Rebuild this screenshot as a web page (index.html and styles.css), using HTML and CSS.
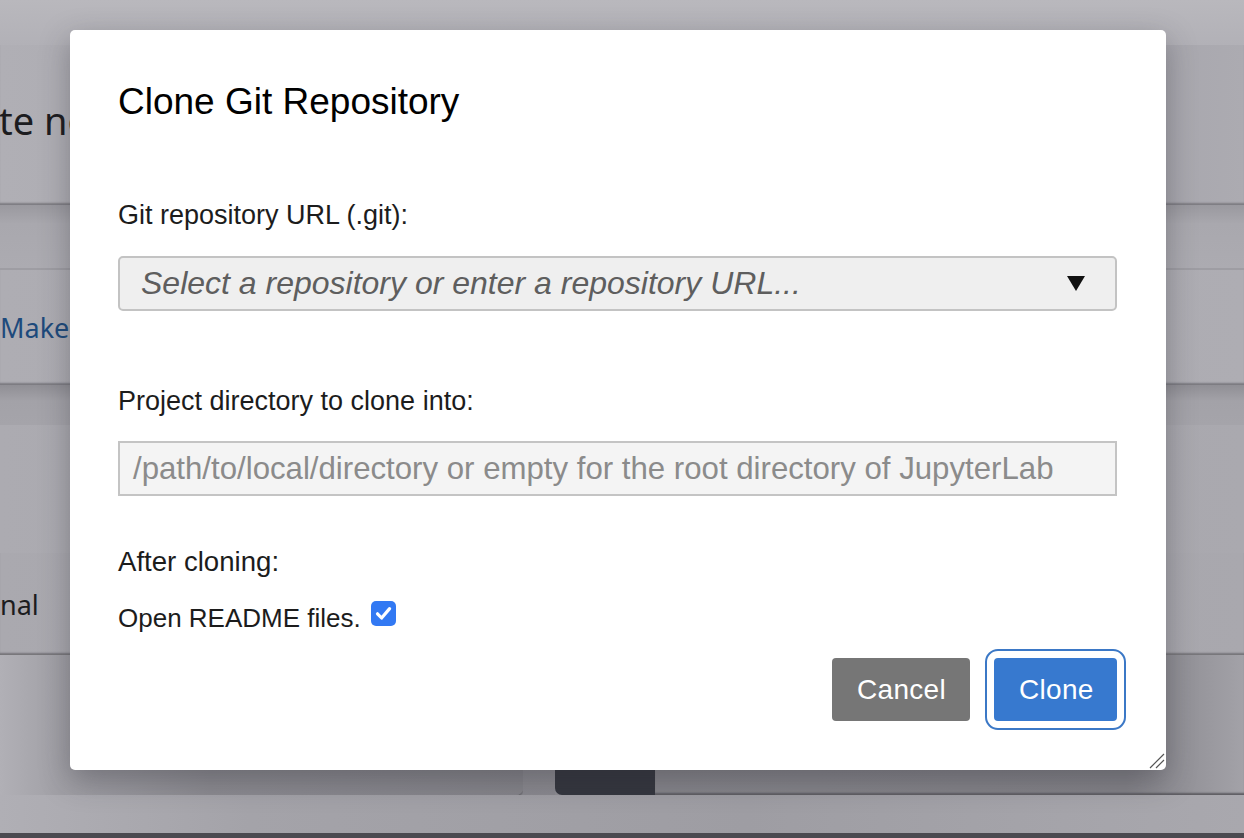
FILE: index.html
```html
<!DOCTYPE html>
<html>
<head>
<meta charset="utf-8">
<link rel="stylesheet" href="styles.css">
</head>
<body>
<div class="bg">
  <div class="row r-top"></div>
  <div class="row r-card1"><div class="clip"><span class="bg-text t1">te no</span></div></div>
  <div class="row r-band1"></div>
  <div class="row r-card2"><div class="clip"><span class="bg-text t2">Maker</span></div></div>
  <div class="row r-band2"></div>
  <div class="row r-area"></div>
  <div class="row r-card3"><div class="clip"><span class="bg-text t3">nal</span></div></div>
  <div class="row r-cards">
    <div class="tile tile-left"></div>
    <div class="tile-gap"></div>
    <div class="tile tile-dark"></div>
    <div class="tile tile-right"></div>
  </div>
  <div class="row r-band3"></div>
  <div class="row r-bottom"></div>
</div>

<div class="dialog">
  <h1 class="title">Clone Git Repository</h1>
  <div class="label l1">Git repository URL (.git):</div>
  <div class="select">
    <span class="select-text">Select a repository or enter a repository URL...</span>
    <svg class="arrow" width="18" height="15" viewBox="0 0 18 15"><polygon points="0,0 18,0 9,15" fill="#111"/></svg>
  </div>
  <div class="label l2">Project directory to clone into:</div>
  <div class="input"><span class="placeholder">/path/to/local/directory or empty for the root directory of JupyterLab</span></div>
  <div class="label l3">After cloning:</div>
  <div class="check-row">
    <span class="label-inline">Open README files.</span>
    <span class="checkbox">
      <svg width="25" height="25" viewBox="0 0 25 25"><path d="M6.5 12.8 L10.6 17 L18.6 7.6" fill="none" stroke="#fff" stroke-width="3.2" stroke-linecap="round" stroke-linejoin="round"/></svg>
    </span>
  </div>
  <div class="buttons">
    <button class="btn btn-cancel">Cancel</button>
    <button class="btn btn-clone">Clone</button>
  </div>
  <svg class="grip" width="18" height="18" viewBox="0 0 18 18"><path d="M3 17 L17 3 M9 17 L17 9" stroke="#555" stroke-width="1.2" fill="none"/></svg>
</div>
</body>
</html>
```

FILE: styles.css
```css
html, body {
  margin: 0;
  padding: 0;
  width: 1244px;
  height: 838px;
  overflow: hidden;
  background: #a9a8ae;
}

.bg {
  display: flex;
  flex-direction: column;
  width: 1244px;
  height: 838px;
}

.row {
  flex: none;
  position: relative;
  overflow: hidden;
}

.clip {
  width: 70px;
  overflow: hidden;
  white-space: nowrap;
}

.r-top { height: 45px; background: linear-gradient(#b9b8bd, #b2b1b7); }
.r-card1 {
  height: 160px;
  background: linear-gradient(90deg, #b0afb5, #a7a6ac 40%, #a6a5ac 90%, #acabb1);
  box-shadow: inset 0 -3px 2px -1px #7d7c82;
  display: flex;
  align-items: center;
}
.r-band1 {
  height: 65px;
  background: linear-gradient(#9a999f, #a9a8ae 30%, #acabb1);
  border-bottom: 2px solid #9e9da3;
  box-sizing: border-box;
}
.r-card2 {
  height: 115px;
  background: linear-gradient(90deg, #aeadb3, #a8a7ad 50%, #aeadb3);
  box-shadow: inset 0 -3px 2px -1px #7b7a80;
  display: flex;
  align-items: center;
}
.r-band2 { height: 40px; background: linear-gradient(#908f95, #a3a2a8 40%, #a5a4aa); }
.r-area { height: 128px; background: linear-gradient(90deg, #acabb1, #a4a3a9 50%, #aaa9af); }
.r-card3 {
  height: 102px;
  background: linear-gradient(90deg, #aaa9af, #a3a2a8 50%, #a9a8ae);
  box-shadow: inset 0 -3px 2px -1px #757479;
  display: flex;
  align-items: center;
}
.r-cards {
  height: 140px;
  display: flex;
  background: #8e8d93;
}
.tile-left {
  width: 523px;
  background: linear-gradient(90deg, #b1b0b6, #a09fa5 12%, #8c8b91 40%, #85848a 100%);
  border-bottom-right-radius: 7px;
  box-shadow: 0 2px 2px #66656a;
}
.tile-gap { width: 32px; background: linear-gradient(#97969c, #8a898f); }
.tile-dark {
  width: 100px;
  background: #34363e;
  border-bottom-left-radius: 7px;
}
.tile-right {
  flex: 1;
  background: linear-gradient(90deg, #86858b, #838288 80%, #a3a2a8);
  box-shadow: inset 0 -3px 2px -1px #5e5d62;
}
.r-band3 { height: 38px; background: linear-gradient(90deg, #b0afb5, #a4a3a9 20%, #9e9da3 60%, #a9a8ae); }
.r-bottom { height: 0; flex: 1; background: #4b4a50; }

.bg-text {
  font-family: "Noto Sans", sans-serif;
  color: #1c1c20;
  white-space: nowrap;
}
.t1 { display: block; font-size: 38px; margin-left: -1px; margin-top: -10px; }
.t2 { display: block; font-size: 27px; color: #1d4a7c; margin-top: 0; }
.t3 { display: block; font-size: 27px; margin-top: 0; }

.dialog {
  position: absolute;
  left: 70px;
  top: 30px;
  width: 1096px;
  height: 740px;
  box-sizing: border-box;
  background: #fff;
  border-radius: 5px;
  padding: 50px 49px 49px 48px;
  box-shadow: 0 10px 30px rgba(40, 40, 50, 0.35);
  font-family: "Liberation Sans", Arial, sans-serif;
  color: #1a1a1a;
}

.title {
  margin: 0;
  font-size: 37px;
  line-height: 44px;
  font-weight: normal;
  color: #000;
}

.label {
  font-size: 27px;
  line-height: 32px;
  color: #1c1c1c;
}
.l1 { margin-top: 75px; }
.l2 { margin-top: 74px; }
.l3 { margin-top: 50px; font-size: 27.6px; }

.select {
  margin-top: 25px;
  height: 55px;
  box-sizing: border-box;
  border: 2px solid #c3c3c3;
  border-radius: 5px;
  background: #efefef;
  display: flex;
  align-items: center;
  justify-content: space-between;
  padding: 0 30px 0 21px;
}
.select-text {
  font-size: 32px;
  font-style: italic;
  color: #5e5e5e;
  white-space: nowrap;
}
.arrow { display: block; }

.input {
  margin-top: 24px;
  height: 55px;
  box-sizing: border-box;
  border: 2px solid #c4c4c4;
  background: #f4f4f4;
  display: flex;
  align-items: center;
  padding: 0 13px;
}
.placeholder {
  font-size: 31.2px;
  color: #8b8b8b;
  white-space: nowrap;
}

.check-row {
  margin-top: 23px;
  height: 32px;
  display: flex;
  align-items: flex-start;
  gap: 10px;
}
.label-inline {
  font-size: 26px;
  line-height: 32px;
  color: #1c1c1c;
  margin-top: 1px;
}
.checkbox {
  width: 25px;
  height: 25px;
  border-radius: 5px;
  background: #3279f3;
  display: block;
}
.checkbox svg { display: block; }

.buttons {
  margin-top: 25px;
  display: flex;
  justify-content: flex-end;
  gap: 24px;
}
.btn {
  height: 63px;
  border: none;
  border-radius: 4px;
  padding: 0 25px;
  font-family: "Liberation Sans", Arial, sans-serif;
  font-size: 28px;
  color: #fff;
  letter-spacing: 0.3px;
}
.btn-cancel { background: #767676; width: 138px; }
.btn-clone {
  background: #3779cf;
  width: 123px;
  outline: 2px solid #3b78c6;
  outline-offset: 7px;
}

.grip {
  position: absolute;
  right: 1px;
  bottom: 1px;
}
```
